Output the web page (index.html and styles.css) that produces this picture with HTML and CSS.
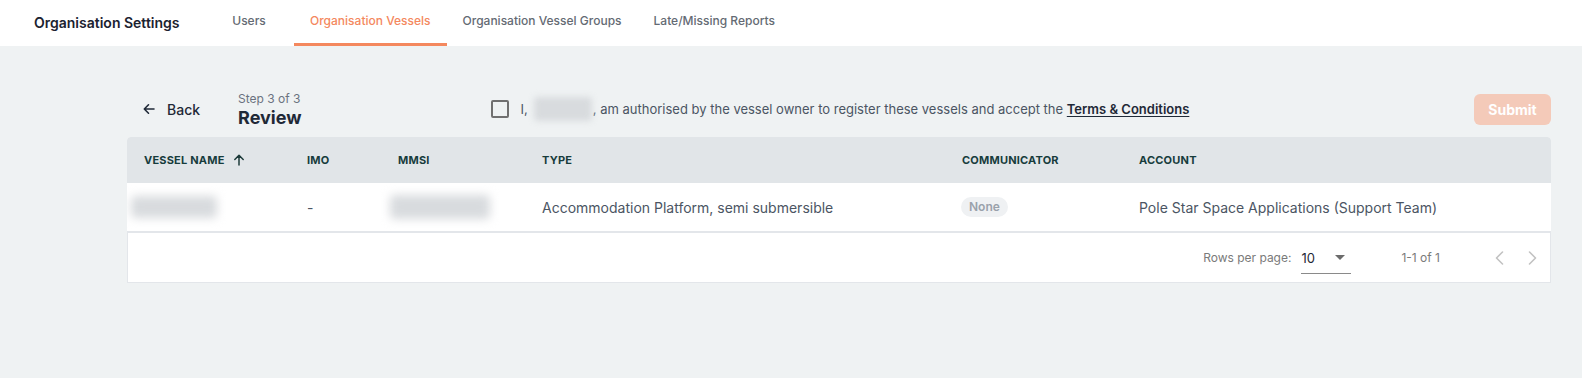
FILE: index.html
```html
<!DOCTYPE html>
<html lang="en">
<head>
    <meta charset="UTF-8">
    <meta name="viewport" content="width=device-width, initial-scale=1.0">
    <title>Organisation Settings</title>
    <link rel="stylesheet" href="styles.css">
</head>
<body>

    <div class="topbar">
        <h1 class="topbar-title">Organisation Settings</h1>
        <nav class="tabs">
            <a class="tab">Users</a>
            <a class="tab tab-active">Organisation Vessels</a>
            <a class="tab">Organisation Vessel Groups</a>
            <a class="tab">Late/Missing Reports</a>
        </nav>
    </div>

    <main class="page">
        <div class="toolbar">
            <button type="button" class="back-btn">
                <svg width="12" height="12" viewBox="0 0 12 12" fill="none" stroke="#1f2937" stroke-width="1.6" stroke-linecap="round" stroke-linejoin="round">
                    <path d="M11 6H1.5M5.5 1.8L1.3 6l4.2 4.2"/>
                </svg>
                <span>Back</span>
            </button>

            <div class="step">
                <span class="step-count">Step 3 of 3</span>
                <span class="step-title">Review</span>
            </div>

            <label class="consent">
                <span class="checkbox"></span>
                <span>I,</span>
                <span class="blur blur-name"></span>
                <span>, am authorised by the vessel owner to register these vessels and accept the <a class="terms">Terms &amp; Conditions</a></span>
            </label>

            <button type="button" class="submit-btn" disabled>Submit</button>
        </div>

        <div class="table-card">
            <table class="vessels">
                <colgroup>
                    <col style="width:164px">
                    <col style="width:91px">
                    <col style="width:144px">
                    <col style="width:420px">
                    <col style="width:177px">
                    <col style="width:428px">
                </colgroup>
                <thead>
                    <tr>
                        <th>
                            <span class="sort">Vessel Name
                                <svg width="12" height="12" viewBox="0 0 12 12" fill="none" stroke="#1d3a3a" stroke-width="1.5" stroke-linecap="round" stroke-linejoin="round">
                                    <path d="M6 11V1.5M1.8 5.5L6 1.3l4.2 4.2"/>
                                </svg>
                            </span>
                        </th>
                        <th>IMO</th>
                        <th>MMSI</th>
                        <th>Type</th>
                        <th>Communicator</th>
                        <th>Account</th>
                    </tr>
                </thead>
                <tbody>
                    <tr>
                        <td><span class="blur blur-vessel"></span></td>
                        <td>-</td>
                        <td><span class="blur blur-mmsi"></span></td>
                        <td>Accommodation Platform, semi submersible</td>
                        <td><span class="badge">None</span></td>
                        <td>Pole Star Space Applications (Support Team)</td>
                    </tr>
                </tbody>
            </table>

            <div class="pagination">
                <span class="rows-label">Rows per page:</span>
                <div class="rows-select">
                    <span>10</span>
                    <svg width="10" height="6" viewBox="0 0 10 6"><path d="M0 0h10L5 5z" fill="#6b6b6b"/></svg>
                </div>
                <span class="rows-range">1-1 of 1</span>
                <button type="button" class="page-btn" disabled>
                    <svg width="9" height="14" viewBox="0 0 9 14" fill="none" stroke="#c2c2c2" stroke-width="1.6" stroke-linecap="round" stroke-linejoin="round"><path d="M7.5 1L1.5 7l6 6"/></svg>
                </button>
                <button type="button" class="page-btn" disabled>
                    <svg width="9" height="14" viewBox="0 0 9 14" fill="none" stroke="#c2c2c2" stroke-width="1.6" stroke-linecap="round" stroke-linejoin="round"><path d="M1.5 1l6 6-6 6"/></svg>
                </button>
            </div>
        </div>
    </main>

</body>
</html>
```

FILE: styles.css
```css
:root {
    --cor-fundo: #eff2f3;
    --cor-texto: #1f2937;
    --cor-suave: #4b5563;
    --cor-cinza: #6b7280;
    --cor-laranja: #f4885e;
    --cor-header-tabela: #e1e5e8;
    --cor-borda: #e3e6ea;
    --cor-titulo-coluna: #173c3c;
}

* {
    box-sizing: border-box;
    margin: 0;
    padding: 0;
}

body {
    font-family: 'Inter', 'Liberation Sans', sans-serif;
    background-color: var(--cor-fundo);
    color: var(--cor-texto);
    width: 1582px;
    height: 378px;
    overflow: hidden;
}

button {
    font-family: inherit;
    border: none;
    background: none;
}

/* barra do topo */
.topbar {
    height: 46px;
    background: #fff;
    display: flex;
    align-items: stretch;
    padding-left: 34px;
}

.topbar-title {
    font-size: 14px;
    font-weight: 600;
    color: #1b2230;
    display: flex;
    align-items: center;
    width: 170px;
    padding-bottom: 2px;
}

.tabs {
    display: flex;
}

.tab {
    min-width: 90px;
    padding: 0 16px 3px;
    display: flex;
    align-items: center;
    justify-content: center;
    font-size: 12px;
    font-weight: 500;
    color: #646a73;
    border-bottom: 3px solid transparent;
    cursor: pointer;
}

.tab-active {
    color: var(--cor-laranja);
    border-bottom-color: var(--cor-laranja);
}

/* conteudo */
.page {
    padding: 40px 31px 0 127px;
}

.toolbar {
    height: 46px;
    display: flex;
    align-items: center;
    margin-bottom: 5px;
}

.back-btn {
    display: flex;
    align-items: center;
    gap: 12px;
    padding: 0 0 0 16px;
    font-size: 14px;
    font-weight: 500;
    color: var(--cor-texto);
    cursor: pointer;
    margin-right: 38px;
}

.step {
    display: flex;
    flex-direction: column;
    margin-top: 2px;
}

.step-count {
    font-size: 12px;
    line-height: 16px;
    color: var(--cor-cinza);
}

.step-title {
    font-size: 18px;
    line-height: 22px;
    font-weight: 700;
    color: var(--cor-texto);
}

.consent {
    display: flex;
    align-items: center;
    margin-left: 189px;
    font-size: 13px;
    color: var(--cor-suave);
    white-space: nowrap;
}

.checkbox {
    width: 18px;
    height: 18px;
    border: 2px solid #707070;
    border-radius: 2px;
    margin-right: 12px;
}

.terms {
    font-weight: 600;
    color: var(--cor-texto);
    text-decoration: underline;
    text-underline-offset: 2px;
}

.blur {
    display: inline-block;
    background: #d8dbde;
    filter: blur(3px);
    border-radius: 4px;
}

.blur-name {
    width: 58px;
    height: 24px;
    margin: 0 1px 0 6px;
}

.submit-btn {
    margin-left: auto;
    width: 77px;
    height: 31px;
    border-radius: 6px;
    background: #f4cab9;
    color: #fff;
    font-size: 14px;
    font-weight: 700;
}

/* tabela */
.table-card {
    border-radius: 4px 4px 0 0;
    overflow: hidden;
}

.vessels {
    width: 100%;
    border-collapse: collapse;
    table-layout: fixed;
    background: #fff;
}

.vessels th {
    height: 46px;
    background: var(--cor-header-tabela);
    text-align: left;
    padding: 0 16px;
    font-size: 11px;
    font-weight: 700;
    text-transform: uppercase;
    color: var(--cor-titulo-coluna);
    letter-spacing: 0.2px;
}

.vessels th:first-child {
    padding-left: 17px;
}

.sort {
    display: inline-flex;
    align-items: center;
    gap: 8px;
}

.vessels td {
    height: 49px;
    padding: 0 16px;
    font-size: 14px;
    color: var(--cor-suave);
    border-bottom: 2px solid var(--cor-borda);
    white-space: nowrap;
}

.blur-vessel {
    width: 86px;
    height: 22px;
    margin-left: -12px;
    vertical-align: middle;
    filter: blur(5px);
}

.blur-mmsi {
    width: 100px;
    height: 24px;
    margin-left: -8px;
    vertical-align: middle;
    filter: blur(5px);
}

.badge {
    display: inline-block;
    height: 20px;
    line-height: 20px;
    padding: 0 8px;
    margin-left: -1px;
    border-radius: 10px;
    background: #eff1f3;
    color: #9aa1ab;
    font-size: 12px;
    font-weight: 600;
}

.pagination {
    height: 50px;
    background: #fff;
    border: 1px solid var(--cor-borda);
    border-top: none;
    display: flex;
    align-items: center;
    justify-content: flex-end;
    padding-right: 1px;
    font-size: 12px;
    color: #7a7a7a;
}

.rows-label {
    margin-right: 10px;
}

.rows-select {
    width: 50px;
    height: 32px;
    padding-top: 7px;
    display: flex;
    align-items: flex-start;
    justify-content: space-between;
    border-bottom: 1px solid #8a8a8a;
    font-size: 13px;
    line-height: 18px;
    color: var(--cor-texto);
    margin-top: 1px;
}

.rows-select svg {
    margin: 6px 6px 0 0;
}

.rows-range {
    margin-left: 50px;
    margin-right: 43px;
    color: #7a7a7a;
}

.page-btn {
    width: 33px;
    height: 33px;
    display: flex;
    align-items: center;
    justify-content: center;
}
```
